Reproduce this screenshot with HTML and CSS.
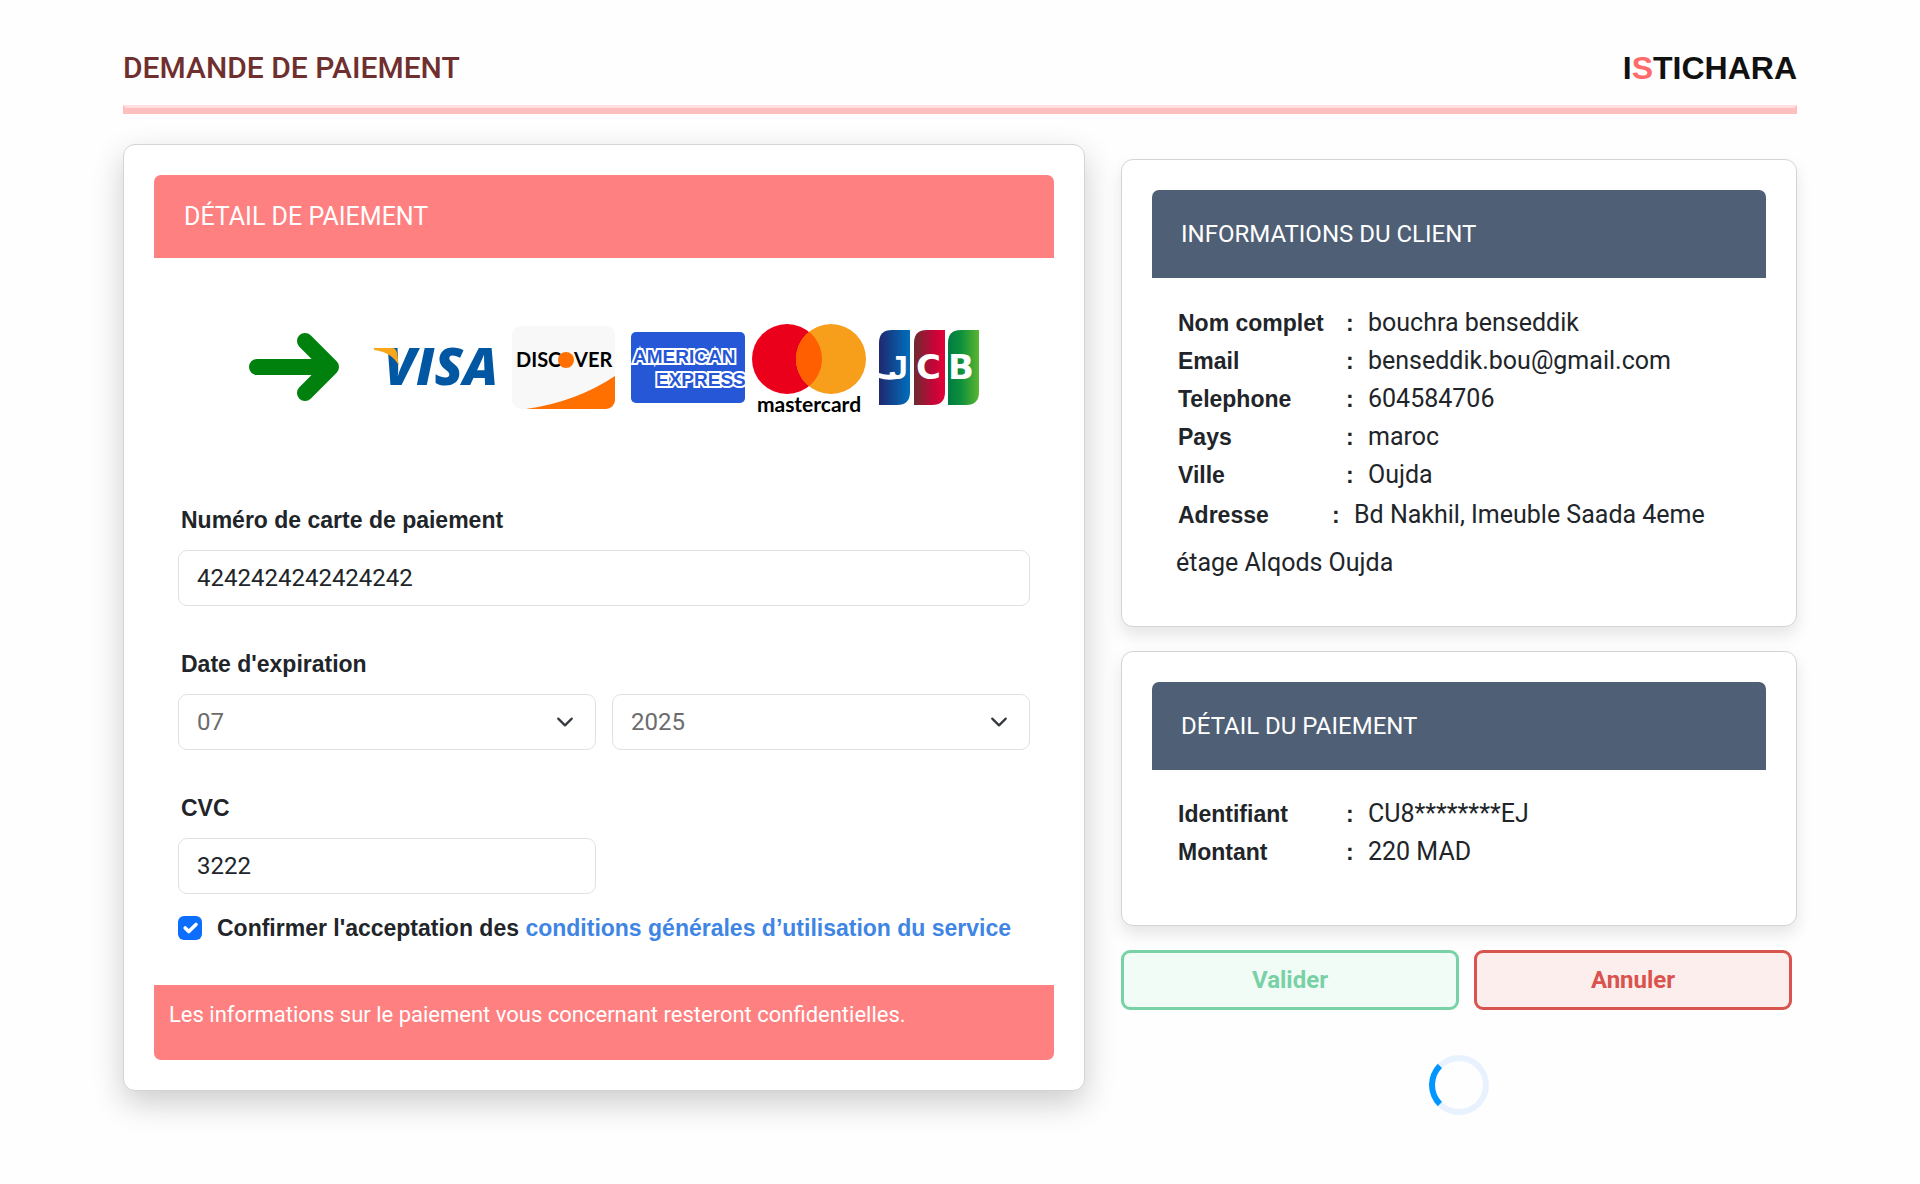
FILE: index.html
```html
<!DOCTYPE html>
<html lang="fr">
<head>
<meta charset="utf-8">
<meta name="viewport" content="width=device-width, initial-scale=1">
<title>Demande de paiement</title>
<link rel="stylesheet" href="styles.css">
</head>
<body>
<div class="page">
  <header class="page-header">
    <h1 class="page-title">DEMANDE DE PAIEMENT</h1>
    <div class="brand">I<span class="brand-accent">S</span>TICHARA</div>
  </header>
  <hr class="rule">
  <form class="layout">
    <section class="card card-main">
      <h2 class="banner banner-pink">DÉTAIL DE PAIEMENT</h2>
      <div class="logos">
        <svg class="logo-arrow" width="90" height="70" viewBox="0 0 90 70" aria-hidden="true">
          <path d="M8 35H76M56 9L82 35L56 61" fill="none" stroke="#00800d" stroke-width="16" stroke-linecap="round" stroke-linejoin="round"/>
        </svg>
        <svg class="logo-visa" width="121" height="38" viewBox="0 0 121 38" role="img" aria-label="Visa">
          <text x="10" y="37" font-family="Open Sans, sans-serif" font-size="52" font-weight="800" font-style="italic" fill="#0157a2">VISA</text>
          <path d="M0 0H18Q22 0 23 5L25 18Q18 4 0 2Z" fill="#faa61a"/>
        </svg>
        <svg class="logo-discover" width="103" height="83" viewBox="0 0 103 83" role="img" aria-label="Discover">
          <defs><clipPath id="discover-clip"><rect width="103" height="83" rx="9"/></clipPath></defs>
          <g clip-path="url(#discover-clip)">
            <rect width="103" height="83" fill="#f8f8f8"/>
            <path d="M14 83Q64 76 103 50V83Z" fill="#ff7000"/>
          </g>
          <text x="4" y="41" font-family="Lato, sans-serif" font-size="20" font-weight="700" fill="#000">DISC</text>
          <circle cx="54" cy="34" r="8" fill="#ff7000"/>
          <text x="62" y="41" font-family="Lato, sans-serif" font-size="20" font-weight="700" fill="#000">VER</text>
        </svg>
        <svg class="logo-amex" width="114" height="71" viewBox="0 0 114 71" role="img" aria-label="American Express">
          <rect width="114" height="71" rx="5" fill="#2557d6"/>
          <g font-family="Liberation Sans, sans-serif" font-size="19" font-weight="700" fill="#2557d6" stroke="#fff" stroke-width="4" stroke-linejoin="miter" paint-order="stroke">
            <text x="2" y="31">AMERICAN</text>
            <text x="25" y="54">EXPRESS</text>
          </g>
        </svg>
        <svg class="logo-mastercard" width="114" height="94" viewBox="0 0 114 94" role="img" aria-label="mastercard">
          <circle cx="35" cy="35" r="35" fill="#eb001b"/>
          <circle cx="79" cy="35" r="35" fill="#f79e1b"/>
          <path d="M57 7.800a35 35 0 0 1 0 54.400a35 35 0 0 1 0-54.400Z" fill="#ff5f00"/>
          <text x="57" y="88" text-anchor="middle" font-family="Lato, sans-serif" font-size="21" font-weight="700" fill="#000">mastercard</text>
        </svg>
        <svg class="logo-jcb" width="101" height="75" viewBox="0 0 101 75" role="img" aria-label="JCB">
          <defs>
            <linearGradient id="jcb-blue"><stop offset="0" stop-color="#1f286f"/><stop offset="1" stop-color="#006fbc"/></linearGradient>
            <linearGradient id="jcb-red"><stop offset="0" stop-color="#6c2c2f"/><stop offset=".6" stop-color="#c00738"/><stop offset="1" stop-color="#e4003a"/></linearGradient>
            <linearGradient id="jcb-green"><stop offset="0" stop-color="#007b40"/><stop offset=".4" stop-color="#0c8f3c"/><stop offset="1" stop-color="#5bb531"/></linearGradient>
          </defs>
          <path d="M0 13Q0 0 13 0H31V62Q31 75 18 75H0Z" fill="url(#jcb-blue)"/>
          <path d="M35 13Q35 0 48 0H66V62Q66 75 53 75H35Z" fill="url(#jcb-red)"/>
          <path d="M69 13Q69 0 82 0H100V62Q100 75 87 75H69Z" fill="url(#jcb-green)"/>
          <path d="M0 43Q8 46 14 44L18 49Q8 51 0 48Z" fill="#fff"/>
          <g font-weight="700" fill="#fff">
            <text x="10" y="49" font-family="Liberation Sans, sans-serif" font-size="34">J</text>
            <text x="37" y="49" font-family="DejaVu Sans, sans-serif" font-size="34">C</text>
            <text x="69" y="49" font-family="DejaVu Sans, sans-serif" font-size="34">B</text>
          </g>
        </svg>
      </div>
      <div class="fields">
        <div class="field">
          <label class="label" for="card-number">Numéro de carte de paiement</label>
          <input class="control" id="card-number" type="text" inputmode="numeric" value="4242424242424242">
        </div>
        <div class="field">
          <label class="label" for="exp-month">Date d'expiration</label>
          <div class="pair">
            <select class="control select" id="exp-month"><option>07</option></select>
            <select class="control select" id="exp-year" aria-label="Année d'expiration"><option>2025</option></select>
          </div>
        </div>
        <div class="field">
          <label class="label" for="cvc">CVC</label>
          <div class="pair"><input class="control" id="cvc" type="text" inputmode="numeric" value="3222"></div>
        </div>
        <div class="consent">
          <input class="check" id="accept" type="checkbox" checked>
          <label for="accept">Confirmer l'acceptation des <a class="link" href="#conditions">conditions générales d’utilisation du service</a></label>
        </div>
      </div>
      <p class="notice">Les informations sur le paiement vous concernant resteront confidentielles.</p>
    </section>

    <div class="side">
      <section class="card card-client">
        <h2 class="banner banner-slate">INFORMATIONS DU CLIENT</h2>
        <div class="details">
          <p class="detail"><b class="key">Nom complet</b><b class="colon">:</b>bouchra benseddik</p>
          <p class="detail"><b class="key">Email</b><b class="colon">:</b>benseddik.bou@gmail.com</p>
          <p class="detail"><b class="key">Telephone</b><b class="colon">:</b>604584706</p>
          <p class="detail"><b class="key">Pays</b><b class="colon">:</b>maroc</p>
          <p class="detail"><b class="key">Ville</b><b class="colon">:</b>Oujda</p>
          <p class="detail detail-address"><b class="key">Adresse</b><b class="colon">:</b>Bd Nakhil, Imeuble Saada 4eme étage Alqods Oujda</p>
        </div>
      </section>
      <section class="card card-payment">
        <h2 class="banner banner-slate">DÉTAIL DU PAIEMENT</h2>
        <div class="details">
          <p class="detail"><b class="key">Identifiant</b><b class="colon">:</b>CU8********EJ</p>
          <p class="detail"><b class="key">Montant</b><b class="colon">:</b>220 MAD</p>
        </div>
      </section>
      <div class="actions">
        <button class="btn btn-ok" type="submit">Valider</button>
        <button class="btn btn-cancel" type="button">Annuler</button>
      </div>
      <div class="spinner" role="status" aria-label="Chargement"></div>
    </div>
  </form>
</div>
</body>
</html>
```
FILE: styles.css
```css
* { box-sizing: border-box; }

body {
  margin: 0;
  background: #fefefe;
  color: #212529;
  font-family: Roboto, "Liberation Sans", sans-serif;
  font-size: 24px;
  line-height: 36px;
}

h1, h2, p { margin: 0; font-weight: 400; }

.page { min-height: 100vh; padding: 48px 123px 60px; }

.page-header {
  display: flex;
  justify-content: space-between;
  align-items: center;
  height: 40px;
}
.page-title { color: #6f2f2f; font-size: 30px; font-weight: 500; }
.brand {
  color: #111;
  font-family: "Liberation Sans", Arial, sans-serif;
  font-size: 32px;
  font-weight: 700;
}
.brand-accent { color: #ff6b6b; }

.rule {
  height: 9px;
  margin: 17px 0 30px;
  border: 3px solid #ffbfbf;
  border-top-color: #ffdfdf;
  background: #ffbfbf;
}

.layout {
  display: grid;
  grid-template-columns: 962fr 676fr;
  gap: 36px;
  align-items: start;
}

.card {
  padding: 30px;
  border: 1px solid #d3d4d5;
  border-radius: 12px;
  background: #fff;
  box-shadow: 0 8px 16px rgba(0, 0, 0, .1);
}
.card-main { box-shadow: 0 12px 32px rgba(0, 0, 0, .2); }

.banner {
  padding: 0 29px;
  border-radius: 7px 7px 0 0;
  color: #fff;
  font-size: 24px;
}
.banner-pink { height: 83px; padding: 0 30px; background: #ff8080; line-height: 83px; font-size: 25px; }
.banner-slate { height: 88px; background: #4f5f75; line-height: 88px; }

.logos {
  display: flex;
  align-items: center;
  height: 218px;
  padding-left: 95px;
}
.logo-visa { margin-left: 35px; overflow: visible; }
.logo-discover { margin-left: 17px; }
.logo-amex { margin-left: 16px; }
.logo-mastercard { margin: 8px 0 0 7px; }
.logo-jcb { margin-left: 13px; }

.fields { padding: 24px 24px 0; }
.field { margin-bottom: 38px; }
.label {
  display: block;
  height: 40px;
  margin-bottom: 10px;
  padding: 2px 3px 0;
}
.label, .consent, .key, .colon {
  font-family: "Liberation Sans", Arial, sans-serif;
  font-size: 23px;
  font-weight: 700;
}
.control {
  width: 100%;
  height: 56px;
  padding: 0 18px;
  border: 1px solid #dee2e6;
  border-radius: 9px;
  background-color: #fff;
  color: #212529;
  font: 24px Roboto, sans-serif;
}
.pair { display: grid; grid-template-columns: 1fr 1fr; gap: 16px; }
.select {
  appearance: none;
  color: #6c6c6c;
  background-image: url("data:image/svg+xml,%3Csvg xmlns='http://www.w3.org/2000/svg' viewBox='0 0 16 16'%3E%3Cpath fill='none' stroke='%23343a40' stroke-linecap='round' stroke-linejoin='round' stroke-width='2' d='m2 5 6 6 6-6'/%3E%3C/svg%3E");
  background-repeat: no-repeat;
  background-position: right 21px center;
  background-size: 18px 18px;
}

.consent { display: flex; align-items: center; gap: 15px; height: 36px; margin-top: -22px; }
.check {
  appearance: none;
  width: 24px;
  height: 24px;
  margin: 0;
  border-radius: 6px;
  background: #0d6efd url("data:image/svg+xml,%3Csvg xmlns='http://www.w3.org/2000/svg' viewBox='0 0 20 20'%3E%3Cpath fill='none' stroke='%23fff' stroke-linecap='round' stroke-linejoin='round' stroke-width='3' d='m6 10 3 3 6-6'/%3E%3C/svg%3E") center / contain no-repeat;
}
.link { color: #3f85e4; text-decoration: none; }

.notice {
  height: 75px;
  margin-top: 39px;
  padding: 12px 15px;
  border-radius: 0 0 7px 7px;
  background: #ff8080;
  color: #fff;
  font-size: 22px;
}

.side { padding-top: 15px; }
.details { padding: 25px 24px 0; }
.detail { font-size: 25px; line-height: 38px; text-indent: 2px; }
.key, .colon { display: inline-block; text-indent: 0; }
.key { width: 168px; }
.colon { width: 22px; }
.detail-address { line-height: 48px; margin-top: -3px; }
.detail-address .key { width: 154px; }
.card-client { height: 468px; }
.card-client .details { padding-top: 26px; }
.card-payment { height: 275px; margin-top: 24px; }

.actions {
  display: grid;
  grid-template-columns: 338fr 318fr;
  gap: 15px;
  margin: 24px 5px 0 0;
}
.btn {
  height: 60px;
  border: 3px solid;
  border-radius: 9px;
  font: 700 24px Roboto, sans-serif;
}
.btn-ok { border-color: #79d1a6; background: #f2fcf7; color: #79d1a6; }
.btn-cancel { border-color: #d9534f; background: #fceeed; color: #d9534f; }

.spinner {
  width: 60px;
  height: 60px;
  margin: 45px auto 0;
  border: 6px solid #e8f2ff;
  border-left-color: #0095ff;
  border-radius: 50%;
}
```
